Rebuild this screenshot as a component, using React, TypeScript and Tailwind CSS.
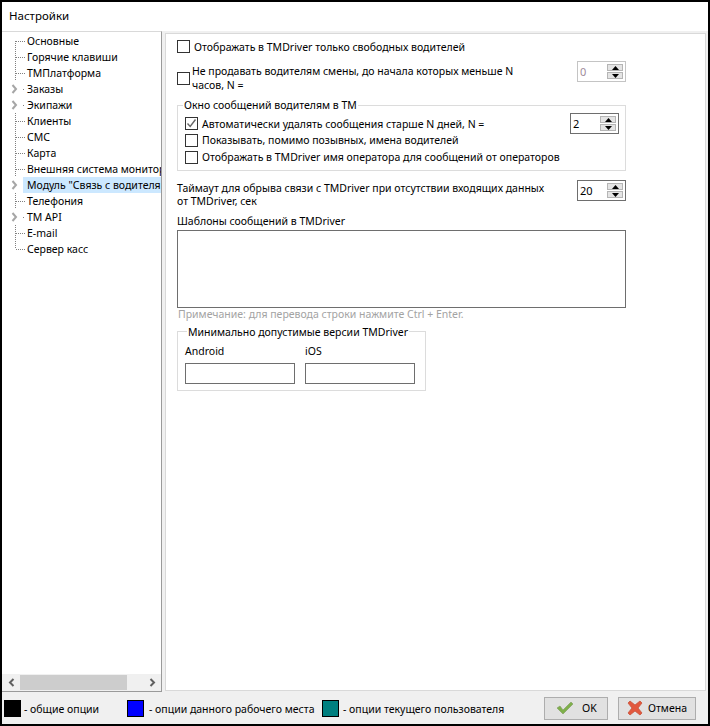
const treeItems = [
  { label: 'Основные' },
  { label: 'Горячие клавиши' },
  { label: 'ТМПлатформа' },
  { label: 'Заказы', expandable: true },
  { label: 'Экипажи', expandable: true },
  { label: 'Клиенты' },
  { label: 'СМС' },
  { label: 'Карта' },
  { label: 'Внешняя система мониторинга' },
  { label: 'Модуль "Связь с водителями"', expandable: true, selected: true },
  { label: 'Телефония' },
  { label: 'TM API', expandable: true },
  { label: 'E-mail' },
  { label: 'Сервер касс', last: true },
];

function TreeGutter({ expandable, last, first }: { expandable?: boolean; last?: boolean; first?: boolean }) {
  return (
    <svg width="20" height="16" className="shrink-0 overflow-visible">
      {expandable ? (
        <>
          <path d="M9.5 4 L13 8 L9.5 12" fill="none" stroke="#a6a6a6" strokeWidth="2" />
          <line x1="20" y1="8.5" x2="22" y2="8.5" stroke="#808080" strokeDasharray="1 1" />
        </>
      ) : (
        <>
          <line x1="12.5" y1={first ? 8 : 0} x2="12.5" y2={last ? 8 : 16} stroke="#808080" strokeDasharray="1 1" />
          <line x1="13" y1="8.5" x2="22" y2="8.5" stroke="#808080" strokeDasharray="1 1" />
        </>
      )}
    </svg>
  );
}

function Checkbox({ checked }: { checked?: boolean }) {
  return (
    <span className="w-[13px] h-[13px] border border-[#333333] bg-white shrink-0 flex items-center justify-center">
      {checked && (
        <svg width="11" height="11" viewBox="0 0 11 11">
          <path d="M1.5 5.5 L4.2 8.5 L9.5 1.5" fill="none" stroke="#666666" strokeWidth="1.4" />
        </svg>
      )}
    </span>
  );
}

function Spin({ value, disabled }: { value: string; disabled?: boolean }) {
  return (
    <div
      className={`w-[49px] h-[21px] border bg-white shrink-0 flex items-center justify-between pl-[2px] pr-[2px] text-[11px] ${
        disabled ? 'border-[#c4c4c4] text-[#a08a9a]' : 'border-[#6e6e6e] text-black'
      }`}
    >
      <span>{value}</span>
      <div className="flex flex-col gap-px">
        {[0, 1].map((i) => (
          <span key={i} className="w-[16px] h-[7px] bg-[#e4e4e4] border border-[#b5b5b5] flex items-center justify-center">
            <svg width="7" height="4" viewBox="0 0 7 4">
              <path d={i === 0 ? 'M3.5 0 L7 4 L0 4 Z' : 'M0 0 L7 0 L3.5 4 Z'} fill="#000000" />
            </svg>
          </span>
        ))}
      </div>
    </div>
  );
}

function Legend({ color, label, className, gap }: { color: string; label: string; className: string; gap: string }) {
  return (
    <div className={`flex items-center ${className}`}>
      <span className={`w-[17px] h-[17px] border border-black ${color} shrink-0`} />
      <span className={`${gap} mt-px whitespace-nowrap`}>{label}</span>
    </div>
  );
}

export default function App() {
  return (
    <div className="w-[710px] h-[726px] border-2 border-black bg-[#f0f0f0] flex flex-col overflow-hidden text-[10.5px] leading-[14px] text-black font-['Noto_Sans',sans-serif]">
      <div className="h-[29px] bg-white flex items-center pl-[7px] pb-px text-[11.5px] shrink-0">Настройки</div>

      <div className="flex flex-1 min-h-0">
        {/* Дерево разделов */}
        <div className="w-[160px] shrink-0 bg-white border-t border-r border-b border-t-[#d9d9d9] border-r-[#9a9a9a] border-b-[#9a9a9a] flex flex-col">
          <div className="flex-1 pt-px pl-px overflow-hidden">
            {treeItems.map((item, i) => (
              <div key={item.label} className="flex h-4 items-center">
                <TreeGutter expandable={item.expandable} last={item.last} first={i === 0} />
                <span
                  className={`flex-1 min-w-0 h-4 flex items-center pl-1 overflow-hidden whitespace-nowrap ${
                    item.selected ? 'bg-[#cce8ff]' : ''
                  }`}
                >
                  {item.label}
                </span>
              </div>
            ))}
          </div>
          <div className="h-[17px] bg-[#f0f0f0] flex items-center shrink-0">
            <svg width="17" height="17" className="shrink-0 ml-px">
              <path d="M10.5 5 L7 8.5 L10.5 12" fill="none" stroke="#606060" strokeWidth="2" />
            </svg>
            <div className="w-[107px] h-[15px] bg-[#cdcdcd]" />
            <div className="flex-1" />
            <svg width="17" height="17" className="shrink-0">
              <path d="M6.5 5 L10 8.5 L6.5 12" fill="none" stroke="#606060" strokeWidth="2" />
            </svg>
          </div>
        </div>

        {/* Страница настроек */}
        <div className="ml-[3px] mr-px mt-[2px] mb-px w-[541px] bg-white border border-[#d9d9d9] pl-[11px] pt-[6px]">
          <div className="flex items-center h-[13px]">
            <Checkbox />
            <span className="ml-[4px] whitespace-nowrap">Отображать в TMDriver только свободных водителей</span>
          </div>

          <div className="flex w-[449px] mt-[8px] justify-between items-start">
            <div className="flex items-center pt-[3px]">
              <Checkbox />
              <span className="ml-[2px] w-[350px]">Не продавать водителям смены, до начала которых меньше N часов, N =</span>
            </div>
            <Spin value="0" disabled />
          </div>

          <div className="relative w-[449px] h-[66px] mt-[13px] border border-[#dcdcdc] pl-[7px] pr-[6px] pt-[7px]">
            <span className="absolute left-[5px] -top-[8px] bg-white px-px whitespace-nowrap">Окно сообщений водителям в ТМ</span>
            <div className="flex items-center justify-between">
              <div className="flex items-center">
                <Checkbox checked />
                <span className="ml-[4px] whitespace-nowrap">Автоматически удалять сообщения старше N дней, N =</span>
              </div>
              <Spin value="2" />
            </div>
            <div className="flex items-center -mt-[1px]">
              <Checkbox />
              <span className="ml-[4px] whitespace-nowrap">Показывать, помимо позывных, имена водителей</span>
            </div>
            <div className="flex items-center mt-[3px]">
              <Checkbox />
              <span className="ml-[4px] whitespace-nowrap">Отображать в TMDriver имя оператора для сообщений от операторов</span>
            </div>
          </div>

          <div className="flex w-[449px] mt-[9px] justify-between items-start">
            <p className="w-[375px] leading-[13px] mt-[2px]">Таймаут для обрыва связи с TMDriver при отсутствии входящих данных от TMDriver, сек</p>
            <Spin value="20" />
          </div>

          <div className="mt-[6px]">Шаблоны сообщений в TMDriver</div>
          <div className="w-[449px] h-[78px] mt-[2px] border border-[#6e6e6e]" />
          <div className="-mt-px ml-px text-[#a3a3a3]">Примечание: для перевода строки нажмите Ctrl + Enter.</div>

          <div className="relative w-[249px] h-[60px] mt-[10px] border border-[#dcdcdc] pl-[7px]">
            <span className="absolute left-[9px] -top-[7px] bg-white px-px whitespace-nowrap">Минимально допустимые версии TMDriver</span>
            <div className="flex gap-[10px] mt-[12px]">
              <div className="w-[110px]">
                <div>Android</div>
                <div className="h-[21px] mt-[5px] border border-[#6e6e6e]" />
              </div>
              <div className="w-[110px]">
                <div>iOS</div>
                <div className="h-[21px] mt-[5px] border border-[#6e6e6e]" />
              </div>
            </div>
          </div>
        </div>
      </div>

      {/* Нижняя панель */}
      <div className="h-[32px] shrink-0 flex items-center pl-[2px]">
        <Legend color="bg-black" label="- общие опции" className="w-[123px]" gap="ml-[3px]" />
        <Legend color="bg-[#0000ff]" label="- опции данного рабочего места" className="w-[195px]" gap="ml-[5px]" />
        <Legend color="bg-[#008080]" label="- опции текущего пользователя" className="w-[222px]" gap="ml-[4px]" />
        <button className="w-[64px] h-[23px] border border-[#adadad] bg-[#e1e1e1] flex items-center pl-[11px]">
          <svg width="18" height="14" viewBox="0 0 18 14">
            <path d="M1 7 L4 5 L7 9 L15 1 L17 3 L7 13 Z" fill="#7fb04a" stroke="#7d9a60" strokeWidth="0.6" />
          </svg>
          <span className="ml-[8px]">OK</span>
        </button>
        <button className="ml-[10px] w-[78px] h-[23px] border border-[#adadad] bg-[#e1e1e1] flex items-center pl-[8px]">
          <svg width="16" height="16" viewBox="0 0 16 16">
            <path d="M3 1 L8 5 L13 1 L15 3 L11 8 L15 13 L13 15 L8 11 L3 15 L1 13 L5 8 L1 3 Z" fill="#e2583e" stroke="#c8543c" strokeWidth="0.8" strokeLinejoin="round" />
          </svg>
          <span className="ml-[5px]">Отмена</span>
        </button>
      </div>
    </div>
  );
}
